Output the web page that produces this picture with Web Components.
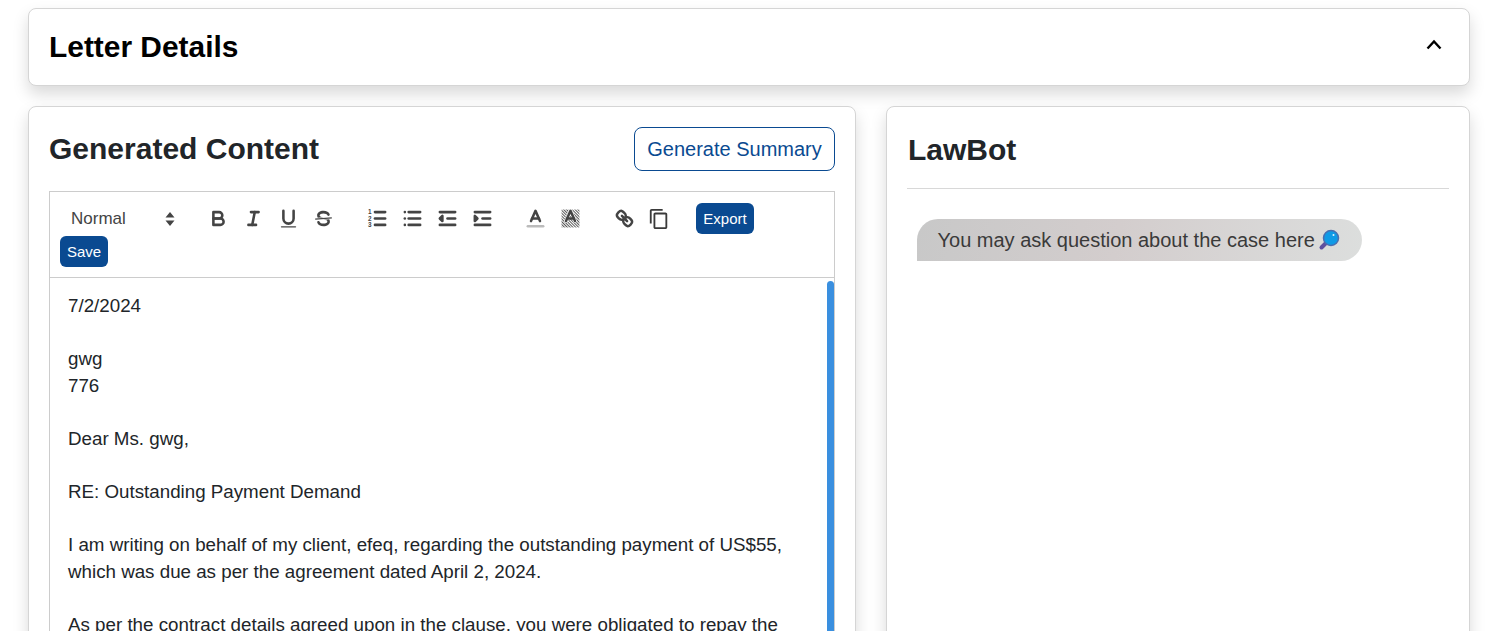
<!DOCTYPE html>
<html>
<head>
<meta charset="utf-8">
<style>
html, body { margin: 0; padding: 0; height: 631px; overflow: hidden; background: #fff; font-family: "Liberation Sans", Arial, sans-serif; color: #212529; }
</style>
</head>
<body>
<letter-page></letter-page>

<script>
const ICONS = {
    bold: `<path d="M5,4H9.5A2.5,2.5,0,0,1,12,6.5v0A2.5,2.5,0,0,1,9.5,9H5A0,0,0,0,1,5,9V4A0,0,0,0,1,5,4Z"/><path d="M5,9h5.5A2.5,2.5,0,0,1,13,11.5v0A2.5,2.5,0,0,1,10.5,14H5a0,0,0,0,1,0,0V9A0,0,0,0,1,5,9Z"/>`,
    italic: `<line x1="7" x2="13" y1="4" y2="4"/><line x1="5" x2="11" y1="14" y2="14"/><line x1="8" x2="10" y1="14" y2="4"/>`,
    underline: `<path d="M5,3V9a4.012,4.012,0,0,0,4,4H9a4.012,4.012,0,0,0,4-4V3"/><rect class="f" height="1" rx="0.5" width="12" x="3" y="15"/>`,
    strike: `<line class="thin" x1="15.5" x2="2.5" y1="8.5" y2="9.5"/><path class="f" d="M9.007,8C6.542,7.791,6,7.519,6,6.5,6,5.792,7.283,5,9,5c1.571,0,2.765.679,2.969,1.309a1,1,0,0,0,1.9-.617C13.356,4.106,11.354,3,9,3,6.2,3,4,4.538,4,6.500a3.2,3.2,0,0,0,.5,1.843Z"/><path class="f" d="M8.984,10C11.457,10.208,12,10.479,12,11.5c0,.708-1.283,1.5-3,1.5-1.571,0-2.765-.679-2.969-1.309a1,1,0,1,0-1.9.617C4.644,13.894,6.646,15,9,15c2.8,0,5-1.538,5-3.5a3.2,3.2,0,0,0-.5-1.843Z"/>`,
    ordered: `<line x1="7" x2="15" y1="4" y2="4"/><line x1="7" x2="15" y1="9" y2="9"/><line x1="7" x2="15" y1="14" y2="14"/><g class="f" font-family="Liberation Sans" font-size="5" font-weight="700"><text x="1.6" y="5.6">1</text><text x="1.6" y="10.6">2</text><text x="1.6" y="15.8">3</text></g>`,
    bullet: `<line x1="6" x2="15" y1="4" y2="4"/><line x1="6" x2="15" y1="9" y2="9"/><line x1="6" x2="15" y1="14" y2="14"/><line x1="3" x2="3" y1="4" y2="4"/><line x1="3" x2="3" y1="9" y2="9"/><line x1="3" x2="3" y1="14" y2="14"/>`,
    outdent: `<line x1="3" x2="15" y1="14" y2="14"/><line x1="3" x2="15" y1="4" y2="4"/><line x1="9" x2="15" y1="9" y2="9"/><polyline points="5 7 5 11 3 9 5 7" style="fill:#444"/>`,
    indent: `<line x1="3" x2="15" y1="14" y2="14"/><line x1="3" x2="15" y1="4" y2="4"/><line x1="9" x2="15" y1="9" y2="9"/><polyline points="3 7 3 11 5 9 3 7" style="fill:#444"/>`,
    color: `<line x1="3" x2="15" y1="15" y2="15" style="stroke:#bbb"/><polyline points="5.5 11 9 3 12.5 11"/><line x1="11.63" x2="6.38" y1="9" y2="9"/>`,
    background: `<defs><pattern id="hatch" width="1.565" height="1.565" patternUnits="userSpaceOnUse" patternTransform="rotate(45)"><rect class="f" width="1.565" height="0.7" style="fill:#444"/></pattern></defs><rect x="2" y="2" width="14" height="14" fill="url(#hatch)" style="stroke:none"/><polyline points="5.5 11 9 3 12.5 11" style="stroke:#fff;stroke-width:3"/><polyline points="5.5 11 9 3 12.5 11"/><line x1="11.63" x2="6.38" y1="9" y2="9"/>`,
    link: `<line x1="7" x2="11" y1="7" y2="11"/><path d="M8.9,4.577a3.476,3.476,0,0,1,.36,4.679A3.476,3.476,0,0,1,4.577,8.9C3.185,7.5,2.035,6.4,4.217,4.217S7.5,3.185,8.9,4.577Z"/><path d="M13.423,9.1a3.476,3.476,0,0,0-4.679-.36,3.476,3.476,0,0,0,.36,4.679c1.392,1.392,2.5,2.542,4.679.36S14.815,10.5,13.423,9.1Z"/>`
};

class PlainCard extends HTMLElement {
    constructor() {
        super();
        this.sr = this.attachShadow({ mode: "open" });
        this.sr.innerHTML = `<style>
:host {
    display: block;
    box-sizing: border-box;
    background: #fff;
    border: 1px solid #d5d5d5;
    border-radius: 8px;
    box-shadow: 0 8px 16px rgba(0, 0, 0, .15);
}
</style><slot></slot>`;
    }
}
customElements.define("plain-card", PlainCard);

class ToolButton extends HTMLElement {
    constructor() {
        super();
        this.sr = this.attachShadow({ mode: "open" });
    }

    connectedCallback() {
        const name = this.getAttribute("icon");
        this.sr.innerHTML = `<style>
:host {
    display: flex;
    align-items: center;
    justify-content: center;
    width: 28px;
    height: 24px;
}
svg { width: 23px; height: 23px; flex: none; display: block; fill: none; stroke: #444; stroke-width: 2; stroke-linecap: round; stroke-linejoin: round; }
.f { fill: #444; stroke: none; }
.thin { stroke-width: 1; stroke-linecap: butt; stroke: #444; }
</style><svg viewBox="0 0 18 18">${ICONS[name]}</svg>`;
    }
}
customElements.define("tool-button", ToolButton);

class EditorToolbar extends HTMLElement {
    constructor() {
        super();
        this.sr = this.attachShadow({ mode: "open" });
        this.sr.innerHTML = `<style>
:host {
    display: flex;
    flex-wrap: wrap;
    align-items: center;
    align-content: flex-start;
    box-sizing: border-box;
    height: 87px;
    padding: 11px 0 10px 10px;
    border: 1px solid #ccc;
}
.picker {
    width: 120px;
    height: 31px;
    margin-right: 24px;
    display: flex;
    align-items: center;
    justify-content: space-between;
    box-sizing: border-box;
    padding: 0 4px 0 11px;
    font-size: 17px;
    color: #444;
}
.picker svg { width: 12px; height: 18px; display: block; }
.group { display: flex; gap: 7px; height: 31px; align-items: center; }
.g1 { margin-right: 26px; }
.g2 { margin-right: 25px; }
.g3 { margin-right: 26px; }
.g4 { margin-right: 23px; }
.copy { width: 22px; height: 22px; margin: 0 3px; fill: #3a3a3a; display: block; }
button {
    height: 31px;
    padding: 0;
    border: 0;
    border-radius: 6px;
    background: #0a4a91;
    color: #fff;
    font: 15px "Liberation Sans", Arial, sans-serif;
}
.export { width: 58px; }
.save { width: 48px; }
.break { flex-basis: 100%; height: 2px; }
</style>
<div class="picker"><span>Normal</span><svg viewBox="0 0 12 18"><path d="M6 2 10.500 7.500H1.500z M1.500 10.500h9L6 16z" fill="#444"/></svg></div>
<div class="group g1">
    <tool-button icon="bold"></tool-button>
    <tool-button icon="italic"></tool-button>
    <tool-button icon="underline"></tool-button>
    <tool-button icon="strike"></tool-button>
</div>
<div class="group g2">
    <tool-button icon="ordered"></tool-button>
    <tool-button icon="bullet"></tool-button>
    <tool-button icon="outdent"></tool-button>
    <tool-button icon="indent"></tool-button>
</div>
<div class="group g3">
    <tool-button icon="color"></tool-button>
    <tool-button icon="background"></tool-button>
</div>
<div class="group g4">
    <tool-button icon="link"></tool-button>
    <svg class="copy" viewBox="0 0 24 24"><path d="M16 1H4c-1.100 0-2 .9-2 2v14h2V3h12V1zm3 4H8c-1.100 0-2 .9-2 2v14c0 1.100.9 2 2 2h11c1.100 0 2-.9 2-2V7c0-1.100-.9-2-2-2zm0 16H8V7h11v14z"/></svg>
</div>
<button class="export">Export</button>
<div class="break"></div>
<button class="save">Save</button>`;
    }
}
customElements.define("editor-toolbar", EditorToolbar);

class LetterEditor extends HTMLElement {
    constructor() {
        super();
        this.sr = this.attachShadow({ mode: "open" });
        this.sr.innerHTML = `<style>
:host {
    display: block;
    position: relative;
    box-sizing: border-box;
    border: 1px solid #ccc;
    border-top: 0;
}
.scroll {
    height: 500px;
    overflow: hidden;
    box-sizing: border-box;
    padding: 15px 25px 0 18px;
    font-size: 18.76px;
    line-height: 26.6px;
    color: #212529;
}
.thumb {
    position: absolute;
    top: 3px;
    right: 0;
    width: 7px;
    height: 420px;
    background: #3a8fdf;
    border-radius: 4px 4px 0 0;
}
</style><div class="scroll"><slot></slot></div><div class="thumb"></div>`;
    }
}
customElements.define("letter-editor", LetterEditor);

class LetterPage extends HTMLElement {
    constructor() {
        super();
        this.sr = this.attachShadow({ mode: "open" });
        this.sr.innerHTML = `<style>
:host {
    display: block;
    padding: 8px 32px 0 28px;
}
.details-card { margin-bottom: 20px; }
.details {
    height: 76px;
    display: flex;
    align-items: center;
    justify-content: space-between;
    padding: 0 26px 0 20px;
}
h2 { margin: 0; font-size: 30px; font-weight: 700; line-height: 1.2; }
.details h2 { color: #000; font-size: 29.9px; }
.details svg { width: 18px; height: 18px; display: block; margin-bottom: 4px; }
.cols { display: grid; grid-template-columns: 828px 584px; column-gap: 30px; }
.content { height: 700px; padding: 20px 20px 0 20px; }
.head { display: flex; justify-content: space-between; align-items: center; height: 44px; margin-bottom: 20px; }
.summary {
    width: 201px;
    height: 44px;
    box-sizing: border-box;
    border: 1px solid #0a4a91;
    border-radius: 8px;
    background: #fff;
    color: #0a4a91;
    font: 20px "Liberation Sans", Arial, sans-serif;
    padding: 0;
}
.law { height: 700px; padding: 0 20px; }
.law h2 { padding: 25px 0 20px 1px; border-bottom: 1px solid #d8d8d8; height: 82px; box-sizing: border-box; }
.bubble {
    display: inline-flex;
    align-items: center;
    margin: 30px 0 0 10px;
    height: 42px;
    padding: 0 22px 0 20.500px;
    border-radius: 21px 21px 21px 0;
    background: linear-gradient(100deg, #c8c8c8, #d3cdcd 45%, #dcdedd);
    color: #3a3a3a;
    font-size: 20px;
}
.bubble svg { width: 22px; height: 22px; display: block; margin-left: 3px; }
</style>
<plain-card class="details-card">
    <div class="details">
        <h2>Letter Details</h2>
        <svg viewBox="0 0 18 18"><path d="M2.500 12.500 9 5.500 15.500 12.500" fill="none" stroke="#000" stroke-width="2.400"/></svg>
    </div>
</plain-card>
<div class="cols">
    <plain-card class="content">
        <div class="head">
            <h2>Generated Content</h2>
            <button class="summary">Generate Summary</button>
        </div>
        <editor-toolbar></editor-toolbar>
        <letter-editor></letter-editor>
    </plain-card>
    <plain-card class="law">
        <h2>LawBot</h2>
        <div class="bubble">You may ask question about the case here<svg viewBox="0 0 22 22">
            <path d="M9 13 3.500 18.500" stroke="#5f4f9e" stroke-width="4" stroke-linecap="round"/>
            <circle cx="13" cy="9" r="7.500" fill="#0f9ae6" stroke="#4a6fb0" stroke-width="1.500"/>
            <circle cx="15.500" cy="6" r="1" fill="#dff3ff"/>
        </svg></div>
    </plain-card>
</div>`;
        const lines = [
            "7/2/2024", "", "gwg", "776", "", "Dear Ms. gwg,", "",
            "RE: Outstanding Payment Demand", "",
            "I am writing on behalf of my client, efeq, regarding the outstanding payment of US$55, which was due as per the agreement dated April 2, 2024.", "",
            "As per the contract details agreed upon in the clause, you were obligated to repay the"
        ];
        const editor = this.sr.querySelector("letter-editor");
        lines.forEach(text => {
            const line = document.createElement("div");
            line.textContent = text;
            if (!text) line.appendChild(document.createElement("br"));
            editor.appendChild(line);
        });
    }
}
customElements.define("letter-page", LetterPage);
</script>
</body>
</html>
